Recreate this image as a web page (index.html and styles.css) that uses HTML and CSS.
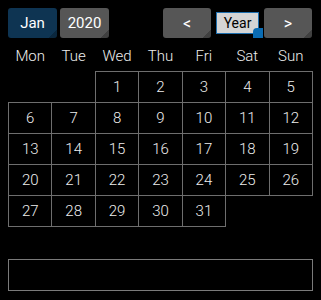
FILE: index.html
```html
<!DOCTYPE html>
<html lang="en">
<head>
  <meta charset="UTF-8">
  <title>Calendar</title>
  <link rel="stylesheet" href="styles.css">
</head>
<body>
  <div class="top">
    <div class="group">
      <button class="btn month">Jan</button>
      <button class="btn year">2020</button>
    </div>
    <div class="group nav">
      <button class="btn arrow">&lt;</button>
      <span class="mode">Year<i class="grip"></i></span>
      <button class="btn arrow">&gt;</button>
    </div>
  </div>

  <table class="cal">
    <thead>
      <tr><th>Mon</th><th>Tue</th><th>Wed</th><th>Thu</th><th>Fri</th><th>Sat</th><th>Sun</th></tr>
    </thead>
    <tbody>
      <tr><td class="empty"></td><td class="empty"></td><td>1</td><td>2</td><td>3</td><td>4</td><td>5</td></tr>
      <tr><td>6</td><td>7</td><td>8</td><td>9</td><td>10</td><td>11</td><td>12</td></tr>
      <tr><td>13</td><td>14</td><td>15</td><td>16</td><td>17</td><td>18</td><td>19</td></tr>
      <tr><td>20</td><td>21</td><td>22</td><td>23</td><td>24</td><td>25</td><td>26</td></tr>
      <tr><td>27</td><td>28</td><td>29</td><td>30</td><td>31</td><td class="empty"></td><td class="empty"></td></tr>
    </tbody>
  </table>

  <div class="entry"></div>
</body>
</html>
```
FILE: styles.css
```css
body {
  margin: 8px;
  background: #000;
  color: #eee;
  font-family: Roboto, "Liberation Sans", sans-serif;
  font-weight: 300;
  font-size: 15px;
}
.top {
  display: flex;
  justify-content: space-between;
  align-items: center;
  height: 30px;
}
.group {
  display: flex;
  align-items: center;
  gap: 3px;
}
.nav {
  gap: 5px;
  margin-right: 1px;
}
.btn {
  position: relative;
  height: 30px;
  border: none;
  border-radius: 3px;
  color: #fff;
  font-family: inherit;
  font-weight: 400;
  font-size: 15px;
  padding: 0;
  overflow: hidden;
}
/* petit coin sombre en bas a droite */
.btn::after {
  content: "";
  position: absolute;
  right: 0;
  bottom: 0;
  width: 8px;
  height: 8px;
  background: linear-gradient(135deg, transparent 50%, rgba(0,0,0,0.25) 50%);
}
.month {
  width: 49px;
  background: #0e3452;
}
.year {
  width: 49px;
  background: #565656;
}
.arrow {
  width: 48px;
  background: #565656;
  font-size: 16px;
}
.mode {
  position: relative;
  box-sizing: border-box;
  width: 43px;
  height: 22px;
  line-height: 20px;
  text-align: center;
  background: #d5d5d5;
  border: 1px solid #1e6fae;
  color: #000;
  font-weight: 400;
  font-size: 14px;
}
.grip {
  position: absolute;
  right: -5px;
  bottom: -5px;
  width: 10px;
  height: 10px;
  background: #0a6cb4;
  border-radius: 4px 0 0 0;
}
.cal {
  border-collapse: collapse;
  width: 305px;
  margin-top: 3px;
  table-layout: fixed;
}
.cal th {
  font-weight: 300;
  height: 30px;
  padding: 0;
  text-align: center;
}
.cal td {
  height: 30px;
  padding: 0;
  text-align: center;
  border: 1px solid #6e6e6e;
}
.cal td.empty {
  border: none;
}
.entry {
  margin-top: 32px;
  width: 305px;
  height: 32px;
  box-sizing: border-box;
  border: 1px solid #7a7a7a;
}
```
